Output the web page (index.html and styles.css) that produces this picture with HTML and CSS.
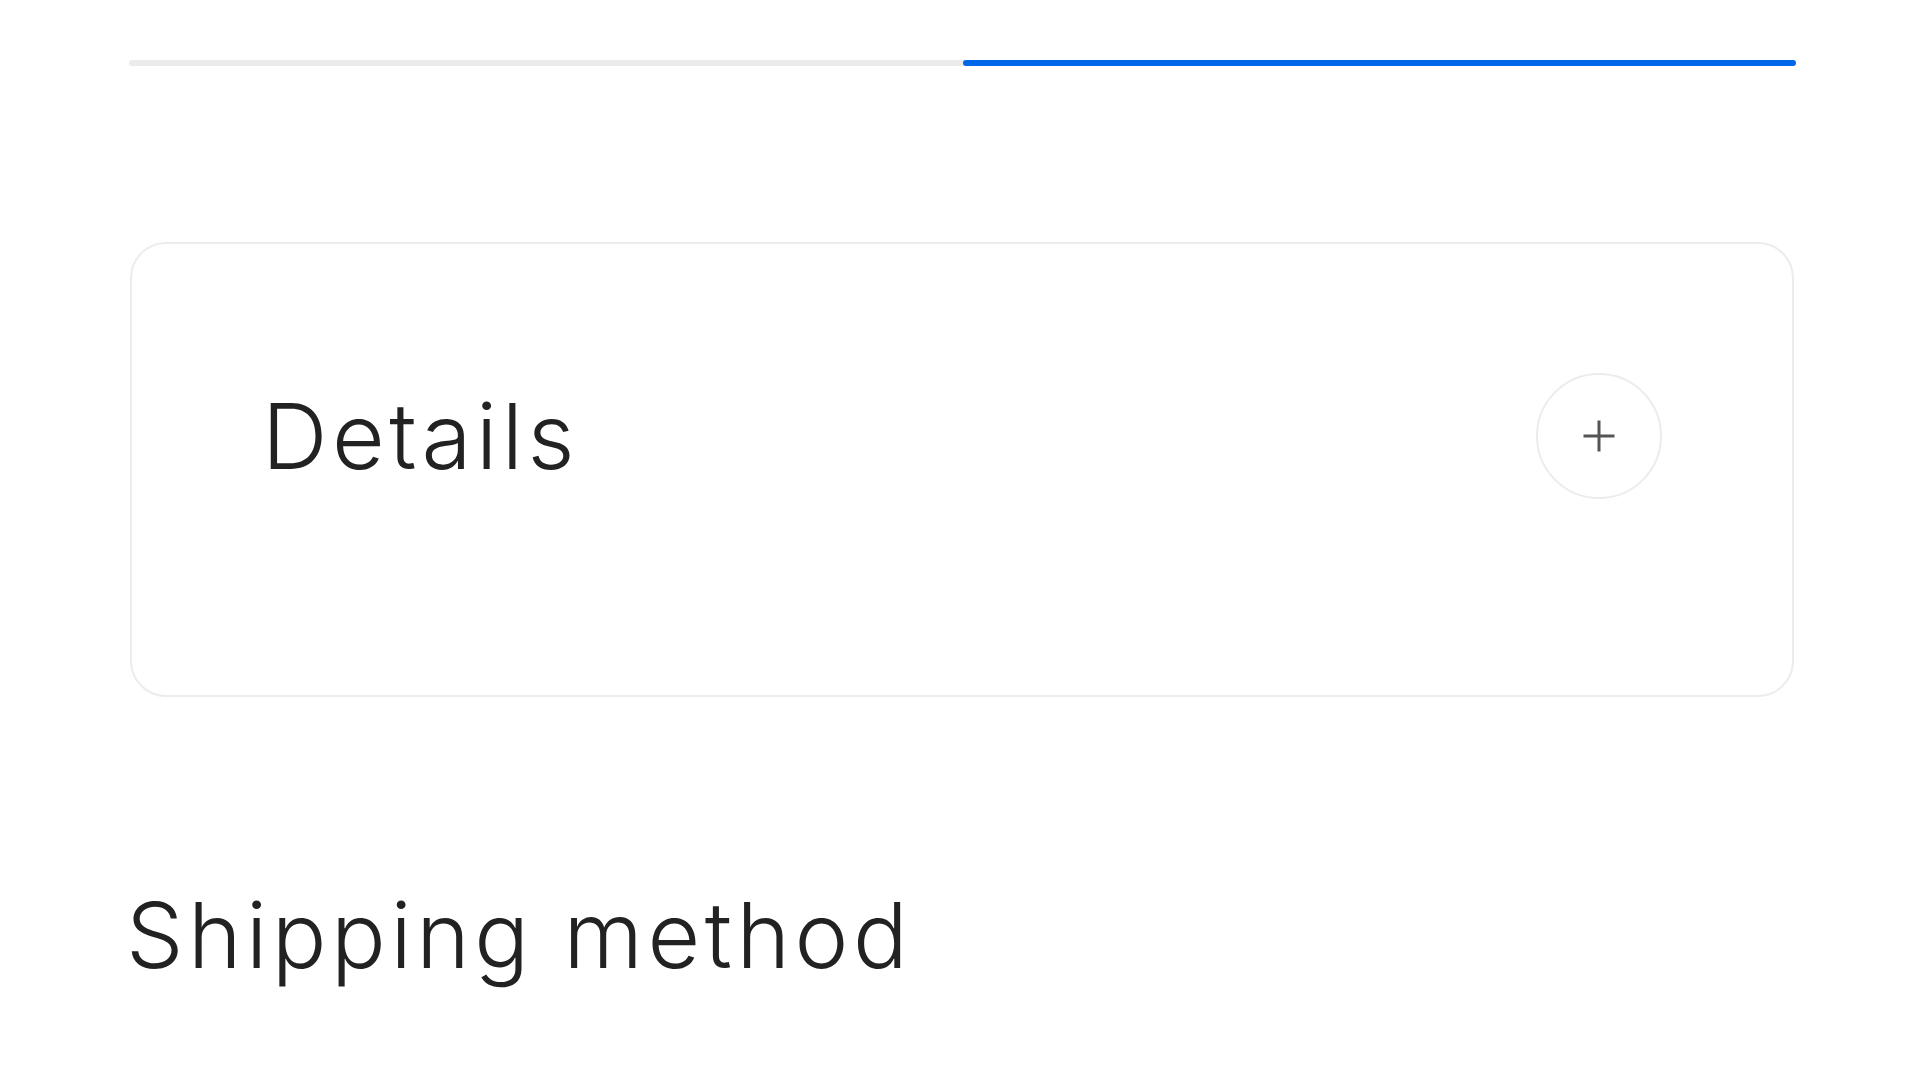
FILE: index.html
```html
<!DOCTYPE html>
<html lang="en">
<head>
<meta charset="utf-8">
<title>Checkout</title>
<link rel="stylesheet" href="styles.css">
</head>
<body>
<main class="page">
  <div class="progress"><div class="progress-fill" style="width:50%"></div></div>
  <section class="card">
    <div class="card-header">
      <h2 class="card-title">Details</h2>
      <button class="add-btn" aria-label="Expand">
        <svg width="34" height="34" viewBox="0 0 34 34"><path d="M17 1.5V32.5M1.5 17H32.5" stroke="#555" stroke-width="3" fill="none"/></svg>
      </button>
    </div>
  </section>
  <h2 class="section-title">Shipping method</h2>
</main>
</body>
</html>
```
FILE: styles.css
```css
html, body {
  margin: 0;
  padding: 0;
  background: #fff;
}
body {
  font-family: Inter, "Noto Sans", sans-serif;
  color: #222;
  min-height: 1089px;
}
.page {
  width: 1667px;
  margin-left: 129px;
  padding-top: 60px;
  padding-bottom: 40px;
}
.progress {
  height: 6px;
  background: #ebebeb;
  border-radius: 3px;
  display: flex;
  justify-content: flex-end;
}
.progress-fill {
  height: 100%;
  background: #0066ea;
  border-radius: 3px;
}
.card {
  margin-top: 176px;
  margin-left: 1px;
  width: 1664px;
  box-sizing: border-box;
  border: 2px solid #ececec;
  border-radius: 36px;
  padding: 129px 130px 196px 130px;
}
.card-header {
  display: flex;
  align-items: center;
  justify-content: space-between;
}
.card-title {
  margin: 0;
  font-size: 91px;
  font-weight: 350;
  letter-spacing: 4.5px;
  line-height: 1;
}
.add-btn {
  width: 126px;
  height: 126px;
  box-sizing: border-box;
  border: 2px solid #ececec;
  border-radius: 50%;
  background: #fff;
  display: flex;
  align-items: center;
  justify-content: center;
  padding: 0;
}
.section-title {
  margin: 193px 0 0 -3px;
  font-size: 91px;
  font-weight: 350;
  letter-spacing: 4.5px;
  line-height: 1;
}
```
